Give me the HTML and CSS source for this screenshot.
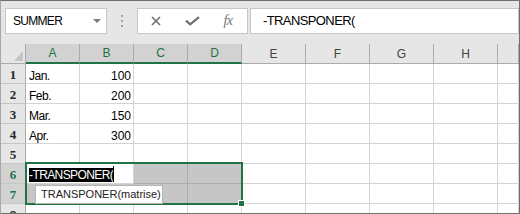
FILE: index.html
```html
<!DOCTYPE html>
<html lang="nb">
<head>
  <meta charset="UTF-8">
  <title>TRANSPONER</title>
  <link rel="stylesheet" href="styles.css">
</head>
<body>
  <div class="frame">
    <div class="toolbar">
      <div class="namebox"><span>SUMMER</span><span class="caret"></span></div>
      <div class="grip"><i></i><i></i><i></i></div>
      <div class="fx-buttons">
        <span class="btn">
          <svg width="10" height="10" viewBox="0 0 10 10"><path d="M1 1L9 9M9 1L1 9" stroke="#6e6e6e" stroke-width="1.6" fill="none"/></svg>
        </span>
        <span class="btn">
          <svg width="15" height="10" viewBox="0 0 15 10"><path d="M1 4.6L5.2 8.4L14 1.2" stroke="#6e6e6e" stroke-width="2.2" fill="none"/></svg>
        </span>
        <span class="btn fx">fx</span>
      </div>
      <div class="formula">-TRANSPONER(</div>
    </div>

    <div class="sheet">
      <div class="corner"><span class="tri"></span></div>
      <div class="colhead sel">A</div>
      <div class="colhead sel">B</div>
      <div class="colhead sel">C</div>
      <div class="colhead sel">D</div>
      <div class="colhead">E</div>
      <div class="colhead">F</div>
      <div class="colhead">G</div>
      <div class="colhead">H</div>
      <div class="colhead"></div>

      <div class="rowhead">1</div>
      <div class="cell">Jan.</div><div class="cell num">100</div>
      <div class="cell"></div><div class="cell"></div><div class="cell"></div><div class="cell"></div><div class="cell"></div><div class="cell"></div><div class="cell"></div>

      <div class="rowhead">2</div>
      <div class="cell">Feb.</div><div class="cell num">200</div>
      <div class="cell"></div><div class="cell"></div><div class="cell"></div><div class="cell"></div><div class="cell"></div><div class="cell"></div><div class="cell"></div>

      <div class="rowhead">3</div>
      <div class="cell">Mar.</div><div class="cell num">150</div>
      <div class="cell"></div><div class="cell"></div><div class="cell"></div><div class="cell"></div><div class="cell"></div><div class="cell"></div><div class="cell"></div>

      <div class="rowhead">4</div>
      <div class="cell">Apr.</div><div class="cell num">300</div>
      <div class="cell"></div><div class="cell"></div><div class="cell"></div><div class="cell"></div><div class="cell"></div><div class="cell"></div><div class="cell"></div>

      <div class="rowhead">5</div>
      <div class="cell"></div><div class="cell"></div>
      <div class="cell"></div><div class="cell"></div><div class="cell"></div><div class="cell"></div><div class="cell"></div><div class="cell"></div><div class="cell"></div>

      <div class="rowhead sel">6</div>
      <div class="cell editor"><span class="picked">-TRANSPONER(</span><span class="cursor"></span></div>
      <div class="cell hl"></div><div class="cell hl"></div>
      <div class="cell"></div><div class="cell"></div><div class="cell"></div><div class="cell"></div><div class="cell"></div>

      <div class="rowhead sel">7</div>
      <div class="cell hl"></div><div class="cell hl"></div><div class="cell hl"></div><div class="cell hl"></div>
      <div class="cell"></div><div class="cell"></div><div class="cell"></div><div class="cell"></div><div class="cell"></div>

      <div class="rowhead">8</div>
      <div class="cell"></div><div class="cell"></div><div class="cell"></div><div class="cell"></div>
      <div class="cell"></div><div class="cell"></div><div class="cell"></div><div class="cell"></div><div class="cell"></div>

      <div class="selection"><span class="handle"></span></div>
      <div class="tip">TRANSPONER(matrise)</div>
    </div>
  </div>
</body>
</html>
```

FILE: styles.css
```css
* { margin: 0; padding: 0; box-sizing: border-box; }
body { width: 520px; height: 214px; overflow: hidden; background: #e6e6e6; font-family: 'Liberation Sans', Arial, sans-serif; color: #000; }

.frame { width: 520px; height: 214px; border: 1px solid #6f6f6f; border-left-color: #a8a8a8; background: #e6e6e6; overflow: hidden; }

/* formula bar */
.toolbar { display: flex; align-items: flex-start; height: 43px; padding: 7px 0 10px 4px; }
.namebox { display: flex; align-items: center; justify-content: space-between; width: 102px; height: 26px; padding: 0 5px 0 7px; background: #fff; border: 1px solid #c6c6c6; font-size: 12px; letter-spacing: -0.7px; }
.caret { width: 0; height: 0; border-left: 4px solid transparent; border-right: 4px solid transparent; border-top: 4px solid #7a7a7a; }
.grip { display: flex; flex-direction: column; align-items: center; justify-content: center; gap: 3px; width: 30px; height: 26px; }
.grip i { display: block; width: 2px; height: 2px; background: #a3a3a3; }
.fx-buttons { display: flex; width: 111px; height: 26px; background: #fff; border: 1px solid #c6c6c6; }
.btn { display: flex; align-items: center; justify-content: center; width: 36px; height: 24px; }
.btn.fx { font: italic 14px 'Liberation Serif', serif; color: #707070; letter-spacing: -0.5px; padding-bottom: 1px; }
.formula { flex: 1; height: 26px; margin-left: 2px; padding-left: 12px; background: #fff; border: 1px solid #c6c6c6; font-size: 13px; letter-spacing: -0.6px; line-height: 24px; }

/* grid */
.sheet { position: relative; display: grid; grid-template-columns: 25px repeat(4, 54px) repeat(4, 64px) 1fr; grid-template-rows: repeat(9, 20px); background: #fff; }
.corner { position: relative; background: #e6e6e6; border-right: 1px solid #ababab; border-bottom: 1px solid #ababab; }
.tri { position: absolute; right: 2px; bottom: 2px; width: 0; height: 0; border-left: 9px solid transparent; border-bottom: 10px solid #c4c4c4; }
.colhead { display: flex; align-items: center; justify-content: center; background: #e6e6e6; border-right: 1px solid #ababab; border-bottom: 1px solid #ababab; font-size: 12px; line-height: 14px; color: #444; }
.colhead.sel { background: #d2d2d2; color: #217346; border-bottom: 2px solid #217346; }
.rowhead { display: flex; align-items: flex-end; justify-content: center; background: #e6e6e6; border-right: 1px solid #ababab; border-bottom: 1px solid #c6c6c6; font: bold 13px/15px 'Liberation Serif', serif; color: #262626; padding-bottom: 1px; }
.rowhead.sel { background: #d2d2d2; color: #217346; }

.cell { display: flex; align-items: flex-end; padding: 0 2px 0 3px; border-right: 1px solid #d4d4d4; border-bottom: 1px solid #d4d4d4; font-size: 12px; line-height: 14px; letter-spacing: -0.5px; white-space: nowrap; overflow: hidden; }
.cell.num { justify-content: flex-end; letter-spacing: 0; }
.cell.hl { background: #c6c6c6; border-color: #ababab; }
.cell.editor { grid-column: span 2; padding-bottom: 1px; background: #fff; }
.picked { background: #000; color: #fff; letter-spacing: -0.6px; }
.cursor { display: inline-block; width: 1px; height: 16px; background: #000; align-self: flex-end; }

.selection { position: absolute; left: 24px; top: 118px; width: 218px; height: 43px; border: 2px solid #217346; }
.handle { position: absolute; left: 211px; top: 36px; width: 7px; height: 7px; background: #217346; border: 1px solid #fff; }
.tip { position: absolute; left: 34px; top: 141px; width: 128px; height: 19px; padding-left: 5px; background: #fff; border: 1px solid #b5b5b5; font-size: 11px; line-height: 17px; color: #222; white-space: nowrap; }
```
